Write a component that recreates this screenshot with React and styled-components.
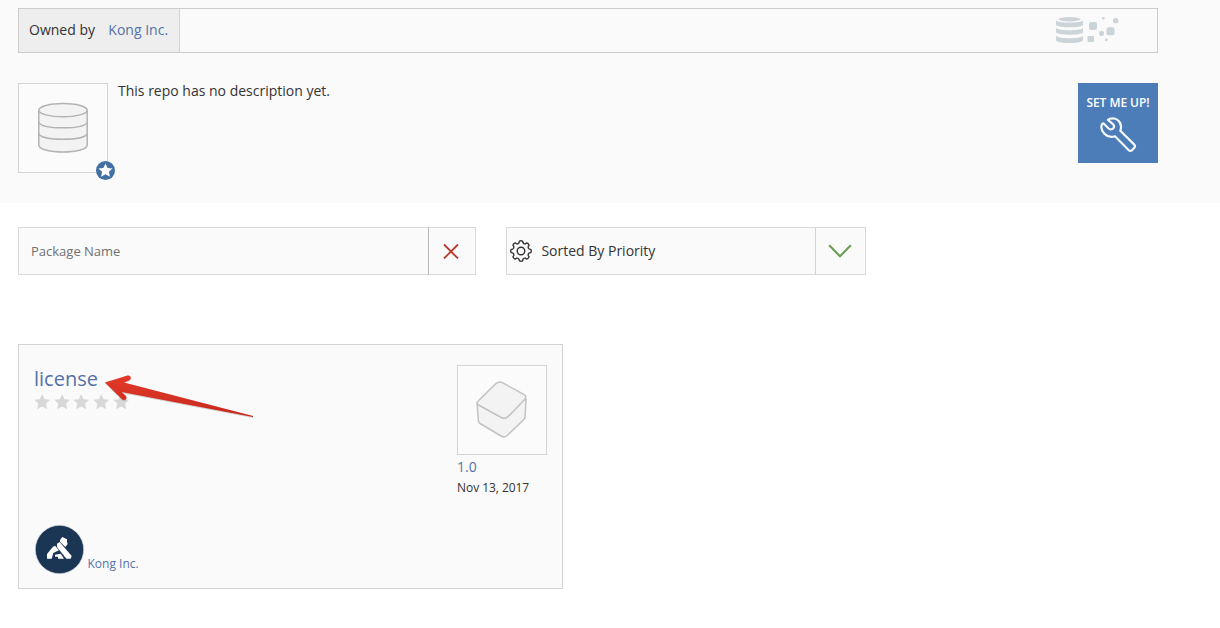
import React from "react";
import styled, { createGlobalStyle } from "styled-components";

const GlobalStyle = createGlobalStyle`
  * { box-sizing: border-box; }
  body {
    margin: 0;
    background: #fff;
    color: #333;
    font: 14px/20px "Open Sans", "Liberation Sans", sans-serif;
  }
  svg { display: block; flex: none; }
`;

const Page = styled.main`
  width: 1220px;
  height: 628px;
  overflow: hidden;
`;
const Header = styled.header`
  height: 203px;
  padding: 8px 62px 0 18px;
  background: #fafafa;
`;
const OwnerBar = styled.div`
  display: flex;
  justify-content: space-between;
  height: 45px;
  border: 1px solid #ccc;
`;
const Owner = styled.div`
  display: flex;
  gap: 13.4px;
  width: 161px;
  padding: 11px 0 0 10px;
  background: #eee;
  border-right: 1px solid #d3d3d3;
  white-space: nowrap;
`;
const Link = styled.a`
  color: #5472a8;
  font-size: ${(p) => p.$size || 14}px;
  line-height: ${(p) => p.$line || 20}px;
`;
const StorageMark = styled.div`
  padding: 7px 37px 0 0;
`;
const Summary = styled.section`
  display: flex;
  margin-top: 30px;
`;
const Thumb = styled.div`
  position: relative;
  width: 90px;
  height: 90px;
  border: 1px solid #d4d4d4;
  background: #fbfbfb;
`;
const Badge = styled.div`
  position: absolute;
  left: 77px;
  top: 77px;
`;
const Description = styled.p`
  flex: 1;
  margin: -2px 0 0 10px;
`;
const SetupButton = styled.button`
  display: flex;
  flex-direction: column;
  align-items: center;
  gap: 4px;
  width: 80px;
  height: 80px;
  padding: 11px 0 0;
  border: 0;
  background: #4c7db9;
  color: #fff;
  font: 600 12px/18px "Open Sans", sans-serif;
  letter-spacing: -0.05px;
  white-space: nowrap;
`;
const Filters = styled.section`
  display: flex;
  gap: 30px;
  padding: 24px 0 0 18px;
`;
const Field = styled.div`
  display: flex;
  align-items: center;
  width: ${(p) => p.$width}px;
  height: 48px;
  padding-left: ${(p) => p.$indent}px;
  border: 1px solid #d9d9d9;
  background: #fafafa;
`;
const FieldText = styled.span`
  flex: 1;
  color: ${(p) => p.$color || "#333"};
  font-size: ${(p) => p.$size || 14}px;
  margin-left: ${(p) => p.$gap || 0}px;
`;
const FieldAction = styled.div`
  display: flex;
  width: ${(p) => p.$width}px;
  height: 48px;
  align-items: center;
  justify-content: center;
  padding-right: ${(p) => p.$shift || 0}px;
  border-left: 1px solid ${(p) => p.$line};
`;
const Card = styled.article`
  position: relative;
  display: flex;
  justify-content: space-between;
  width: 545px;
  height: 245px;
  margin: 69px 0 0 18px;
  padding: 20px 15px 0;
  border: 1px solid #d4d4d4;
  background: #fafafa;
`;
const CardInfo = styled.div`
  display: flex;
  flex-direction: column;
`;
const Stars = styled.div`
  display: flex;
  margin-top: 1px;
`;
const Author = styled.div`
  display: flex;
  gap: 4px;
  margin: 114px 0 0 0.5px;
  align-items: flex-start;
`;
const AuthorName = styled(Link)`
  margin-top: 30px;
`;
const Release = styled.div`
  display: flex;
  flex-direction: column;
  width: 90px;
`;
const ReleaseDate = styled.time`
  font-size: 12px;
  line-height: 18px;
  letter-spacing: -0.05px;
`;
const Pointer = styled.svg`
  position: absolute;
  left: 83px;
  top: 25px;
`;

const starPoints = "0,-8 2.4,-2.8 8,-2.2 3.9,1.5 5,7.2 0,4.4 -5,7.2 -3.9,1.5 -8,-2.2 -2.4,-2.8";

function StorageIcon() {
  return (
    <svg width="64" height="30" viewBox="0 0 64 30" fill="#cbd4d8">
      <ellipse cx="13.5" cy="3.2" rx="11" ry="2.2" />
      <path d="M0 4.4C3 7.3 24 7.3 27 4.4V9c-3 3.1-24 3.1-27 0Z" />
      <path d="M0 12c3 3 24 3 27 0v4.6c-3 3-24 3-27 0Z" />
      <path d="M0 20c3 3 24 3 27 0v4.4c-3 3.5-24 3.5-27 0Z" />
      <rect x="33" y="6" width="8" height="8" rx="2" />
      <rect x="31.5" y="20" width="6.5" height="6" rx="1" />
      <rect x="50.5" y="11.3" width="8" height="8" rx="2" />
      <rect x="43" y="15" width="5" height="5" rx="2" />
      <rect x="57" y="2.3" width="5.3" height="5" rx="1.5" />
      <rect x="46" y="1" width="2.6" height="2.6" rx=".8" />
      <rect x="49" y="22.5" width="2.6" height="2.6" rx=".8" />
    </svg>
  );
}

function DatabaseIcon() {
  return (
    <svg width="88" height="88" viewBox="0 0 88 88" fill="#f3f3f3" stroke="#b3b3b3" strokeWidth="1.5">
      <path d="M19.8 26.5V61c0 9.3 48.4 9.3 48.4 0V26.5" />
      <ellipse cx="44" cy="26.2" rx="24.2" ry="6.6" />
      <path d="M19.8 38.6c5 7 43.4 7 48.4 0M19.8 50c5 7 43.4 7 48.4 0" fill="none" />
    </svg>
  );
}

function FavoriteIcon() {
  return (
    <svg width="19" height="19" viewBox="-9.5 -9.5 19 19">
      <circle r="9.5" fill="#4270a2" />
      <polygon points={starPoints} fill="#fff" transform="scale(.88)" />
    </svg>
  );
}

function WrenchIcon() {
  return (
    <svg width="38" height="38" viewBox="0 0 38 38" fill="none" stroke="#f4f7fb" strokeWidth="2.2" strokeLinejoin="round" strokeLinecap="round">
      <path d="M9 3.8C11 2 15.5 1.6 18.6 4c3 2.3 4.2 6.4 2.7 10.8l14 13.8c1 1 1 2.2 0 3.2L33 34.2c-1 1-2.2 1-3.2 0L16 20.2c-3.6 1.2-7.6.6-10.5-2.3C2.8 15.2 1.7 11.6 3 8.2l1.4-.9 5 5c1.4 1.3 3.5 1.4 4.7.2 1.2-1.2 1.1-3.1-.2-4.4Z" />
    </svg>
  );
}

function GearIcon() {
  const teeth = Array.from({ length: 8 }, (_, i) => {
    const at = (r, deg) => {
      const a = ((i * 45 + deg) * Math.PI) / 180;
      return `${(r * Math.sin(a)).toFixed(2)} ${(-r * Math.cos(a)).toFixed(2)}`;
    };
    return `${i ? "L" : "M"}${at(8.6, -13)} L${at(10, -9)} Q${at(10.6, 0)} ${at(10, 9)} L${at(8.6, 13)} Q${at(7.3, 22.5)} ${at(8.6, 32)}`;
  }).join(" ");
  return (
    <svg width="22" height="22" viewBox="-11 -11 22 22" fill="none" stroke="#333" strokeWidth="1.4" strokeLinejoin="round">
      <path d={`${teeth}Z`} />
      <circle r="3.8" />
    </svg>
  );
}

function PackageIcon() {
  return (
    <svg width="88" height="88" viewBox="0 0 88 88" fill="#f3f3f3" stroke="#c2c2c2" strokeWidth="1.5">
      <path d="M19.2 38 20.3 54.5q.2 2 1.8 3L43 70q3.4 2 6.2-.5L65.4 54q1.6-1.5 1.7-3.5L68 33.5Z" />
      <path d="M20.4 34.7 37.8 17.8q3.2-3.1 7-.9l21 11.5q3.6 2.1.8 5L50.3 50.4q-3.3 3.2-7 1.1L20.5 39q-3-1.8-.1-4.3Z" />
    </svg>
  );
}

function KongAvatar() {
  return (
    <svg width="49" height="49" viewBox="0 0 147 147">
      <circle cx="73.5" cy="73.5" r="72.5" fill="#1b3655" stroke="#d3d7dc" strokeWidth="2" />
      <g fill="#fff">
        <path d="m75 45 7-9 14 7v8l2 6-7 9-16-16Z" />
        <path d="m66 56 8-5 36 42-3 8H94L66 66Z" />
        <path d="m60 62 12 14-17 8-5 17H36V87l18-22Z" />
        <path d="m60 89 17-3 10 15H69v-6h-9Z" />
      </g>
    </svg>
  );
}

function RatingStar() {
  return (
    <svg width="19.7" height="18" viewBox="-8.2 -9 19.7 18">
      <polygon points={starPoints} fill="#d8d8d8" />
    </svg>
  );
}

function PointerArrow() {
  return (
    <Pointer width="154" height="54" viewBox="0 0 154 54">
      <defs>
        <linearGradient id="arrowFill" x1="0.5" y1="0" x2="0.4" y2="1">
          <stop offset="0" stopColor="#e63b2b" />
          <stop offset="1" stopColor="#c5271b" />
        </linearGradient>
        <filter id="arrowShadow"><feDropShadow dx="0" dy=".5" stdDeviation=".5" floodOpacity=".35" /></filter>
      </defs>
      <path d="M3 12.6 25.5 5.6c3.4-.8 4.6 3.6 1.4 4.8l-5 2L151 46v1L19.6 21.9l4.4 4.2c1.7 2.7-1.4 5.4-3.9 3.2Z" fill="url(#arrowFill)" filter="url(#arrowShadow)" />
    </Pointer>
  );
}

export default function App() {
  return (
    <Page>
      <GlobalStyle />
      <Header>
        <OwnerBar>
          <Owner><span>Owned by</span><Link>Kong Inc.</Link></Owner>
          <StorageMark><StorageIcon /></StorageMark>
        </OwnerBar>
        <Summary>
          <Thumb><DatabaseIcon /><Badge><FavoriteIcon /></Badge></Thumb>
          <Description>This repo has no description yet.</Description>
          <SetupButton>SET ME UP!<WrenchIcon /></SetupButton>
        </Summary>
      </Header>
      <Filters>
        <Field $width={458} $indent={12}>
          <FieldText $color="#707070" $size={13}>Package Name</FieldText>
          <FieldAction $width={47} $line="#b8b8b8" $shift={3}>
            <svg width="16" height="16" viewBox="0 0 16 16" stroke="#b53c2c" strokeWidth="1.8">
              <path d="m1 1.5 14 14m0-14-14 14" />
            </svg>
          </FieldAction>
        </Field>
        <Field $width={360} $indent={3}>
          <GearIcon />
          <FieldText $gap={9.4}>Sorted By Priority</FieldText>
          <FieldAction $width={50} $line="#d4d4d4" $shift={2}>
            <svg width="24" height="14" viewBox="0 0 24 14" fill="none" stroke="#689f50" strokeWidth="2.1">
              <path d="m1.2 1.2 10.8 11 10.8-11" />
            </svg>
          </FieldAction>
        </Field>
      </Filters>
      <Card>
        <CardInfo>
          <Link $size={20} $line={27}>license</Link>
          <Stars>{[1, 2, 3, 4, 5].map((n) => <RatingStar key={n} />)}</Stars>
          <Author><KongAvatar /><AuthorName $size={12} $line={18}>Kong Inc.</AuthorName></Author>
        </CardInfo>
        <Release>
          <Thumb><PackageIcon /></Thumb>
          <Link $line={24}>1.0</Link>
          <ReleaseDate>Nov 13, 2017</ReleaseDate>
        </Release>
        <PointerArrow />
      </Card>
    </Page>
  );
}
